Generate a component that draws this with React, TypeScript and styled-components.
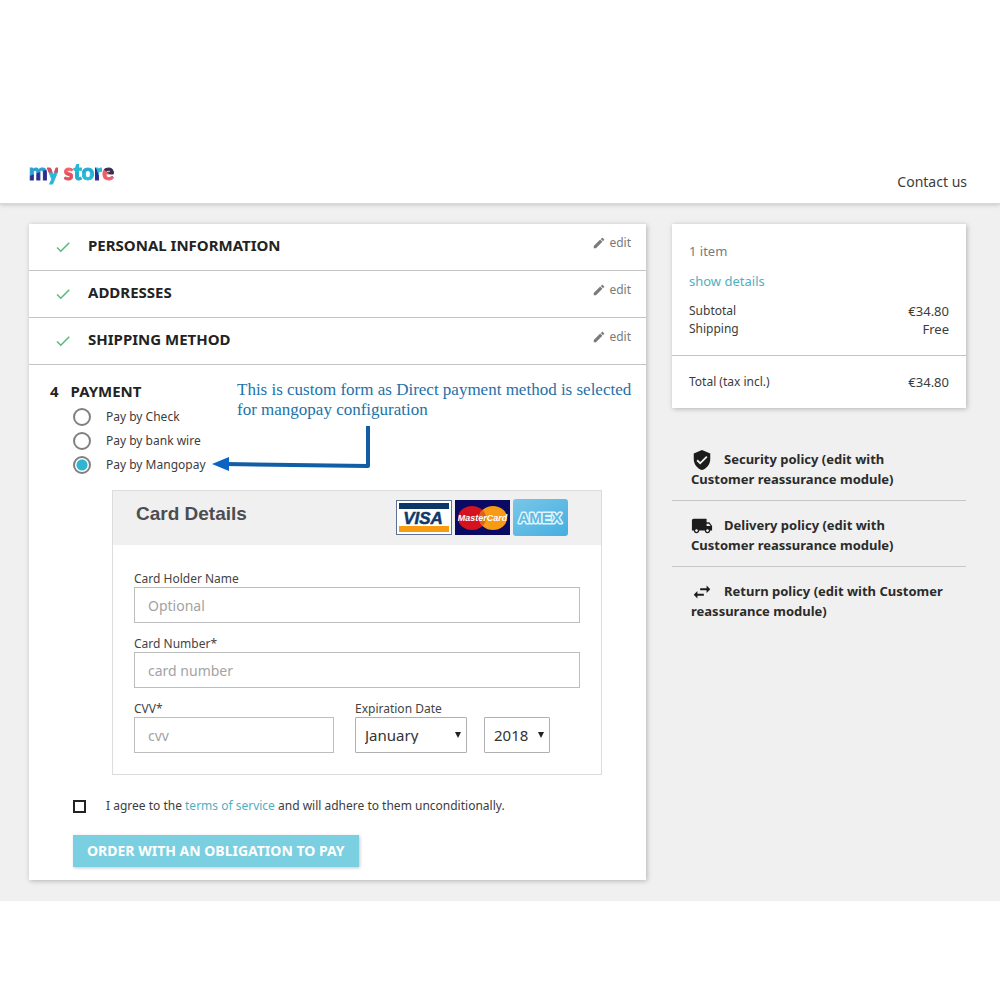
import React, { useState } from "react";
import styled, { createGlobalStyle } from "styled-components";
import { MdCheck, MdEdit, MdVerifiedUser, MdLocalShipping, MdSwapHoriz } from "react-icons/md";

const GlobalStyle = createGlobalStyle`
  *, *::before, *::after { box-sizing: border-box; }
  body {
    margin: 0;
    background: #fff;
    color: #333;
    font-family: "Noto Sans", "Open Sans", sans-serif;
    font-size: 12px;
    line-height: 18px;
  }
`;

const Header = styled.header`
  display: flex;
  justify-content: space-between;
  align-items: flex-end;
  padding: 156px 33px 12px 29px;
  border-bottom: 1px solid #d8d8d8;
  box-shadow: 0 1px 4px rgba(0, 0, 0, 0.18);
  position: relative;
`;

const Logo = styled.a`
  font-family: Lato, sans-serif;
  font-weight: 900;
  font-size: 22px;
  line-height: 32px;
  padding-bottom: 3px;
  text-decoration: none;
`;

const Letter = styled.span<{ $top: string; $bottom: string; $angle?: number }>`
  background: linear-gradient(
    ${(p) => p.$angle ?? 180}deg,
    ${(p) => p.$top} 52%,
    ${(p) => p.$bottom} 56%
  );
  background-clip: text;
  -webkit-background-clip: text;
  color: transparent;
  -webkit-text-stroke: 1px transparent;
`;

const ContactLink = styled.a`
  font-size: 14px;
  color: #3c3c3c;
  text-decoration: none;
`;

const Wrapper = styled.main`
  display: grid;
  grid-template-columns: minmax(0, 1fr) 294px;
  gap: 26px;
  align-items: start;
  padding: 20px 34px 21px 29px;
  background: #f0f0f0;
`;

const Panel = styled.section`
  background: #fff;
  box-shadow: 1px 1px 5px rgba(0, 0, 0, 0.25);
`;

const StepRow = styled.div`
  display: flex;
  align-items: center;
  height: 47px;
  padding: 0 15px 4px 25px;
  border-bottom: 1px solid #c4c4c4;
`;

const StepCheck = styled(MdCheck)`
  width: 18px;
  height: 18px;
  margin: 4px 16px 0 0;
  color: #5cb67c;
`;

const StepTitle = styled.h2`
  flex: 1;
  margin: 0;
  font-size: 15px;
  line-height: 20px;
  font-weight: 700;
  color: #232323;
`;

const EditLink = styled.a`
  display: flex;
  align-items: center;
  gap: 3px;
  padding-bottom: 4px;
  font-size: 12px;
  color: #7a7a7a;
  text-decoration: none;
`;

const Payment = styled.div`
  position: relative;
  padding: 16px 44px 13px;
`;

const PaymentTitle = styled(StepTitle)`
  display: flex;
  gap: 12px;
  margin-left: -23px;
`;

const Options = styled.div`
  display: grid;
  gap: 6px;
  padding-top: 7px;
`;

const Option = styled.label`
  display: flex;
  align-items: center;
  gap: 15px;
  height: 18px;
  color: #3c3c3c;
`;

const Radio = styled.input`
  appearance: none;
  width: 18px;
  height: 18px;
  margin: 0;
  border: 2px solid #808080;
  border-radius: 50%;
  background: #fff;
  &:checked {
    background: radial-gradient(circle, #2fb5d2 5px, #fff 6px);
  }
`;

const Note = styled.aside`
  position: absolute;
  left: 208px;
  top: 15px;
  font-family: "Liberation Serif", serif;
  font-size: 17px;
  line-height: 20px;
  color: #2272a8;
`;

const NoteText = styled.p`
  margin: 0;
`;

const NoteArrow = styled.svg`
  position: absolute;
  left: -26px;
  top: 43px;
`;

const CardBox = styled.section`
  margin: 16px 0 0 39px;
  border: 1px solid #dcdcdc;
`;

const CardHead = styled.header`
  display: flex;
  align-items: flex-start;
  justify-content: space-between;
  height: 54px;
  padding: 8px 33px 0 23px;
  background: #f0f0f0;
`;

const CardTitle = styled.h3`
  margin: 4px 0 0;
  font-family: "Liberation Sans", Arial, sans-serif;
  font-size: 19px;
  line-height: 22px;
  color: #4c4d52;
`;

const Brands = styled.div`
  display: flex;
  gap: 3px;
`;

const CardBody = styled.div`
  display: grid;
  gap: 11px;
  padding: 24px 21px 21px;
`;

const Field = styled.div`
  display: flex;
  flex-direction: column;
  flex: none;
`;

const CvvField = styled(Field)`
  width: 200px;
`;

const Label = styled.label`
  padding-top: 2px;
  line-height: 16px;
  color: #444;
  white-space: nowrap;
`;

const TextInput = styled.input`
  width: 100%;
  height: 36px;
  padding: 0 13px;
  border: 1px solid #bdbdbd;
  border-radius: 0;
  font: inherit;
  font-size: 14px;
  color: #333;
  &::placeholder { color: #a3a3a3; opacity: 1; }
`;

const FieldRow = styled.div`
  display: flex;
  align-items: flex-end;
`;

const ExpiryField = styled(Field)`
  margin: 0 17px 0 21px;
`;

const SelectWrap = styled.span<{ $width: number }>`
  position: relative;
  display: block;
  width: ${(p) => p.$width}px;
`;

const Select = styled.select`
  appearance: none;
  width: 100%;
  height: 36px;
  padding: 0 9px;
  border: 1px solid #b0b0b0;
  border-radius: 1px;
  background: #fff;
  font: inherit;
  font-size: 15px;
  color: #333;
`;

const Caret = styled.svg`
  position: absolute;
  right: 6px;
  top: 15px;
  pointer-events: none;
`;

const Terms = styled.div`
  display: flex;
  align-items: center;
  gap: 20px;
  margin-top: 22px;
  color: #3c3c3c;
`;

const Checkbox = styled.input`
  appearance: none;
  width: 13px;
  height: 13px;
  margin: 0;
  border: 2px solid #232323;
  background: #fff;
  &:checked { box-shadow: inset 0 0 0 2px #fff; background: #232323; }
`;

const TextLink = styled.a`
  color: #4fafc2;
  text-decoration: none;
`;

const OrderButton = styled.button`
  display: block;
  margin-top: 20px;
  height: 32px;
  padding: 0 14px;
  border: 0;
  background: #7acfe1;
  box-shadow: 1px 1px 3px rgba(0, 0, 0, 0.22);
  color: #fff;
  font: inherit;
  font-size: 14px;
  font-weight: 700;
  cursor: pointer;
`;

const Summary = styled(Panel)`
  color: #3c3c3c;
`;

const SummaryTop = styled.div`
  padding: 18px 17px 17px;
  border-bottom: 1px solid #c4c4c4;
`;

const ItemCount = styled.p`
  margin: 0 0 12px;
  font-size: 13px;
  color: #7a7a7a;
`;

const DetailsLink = styled(TextLink)`
  display: inline-block;
  margin-bottom: 12px;
  font-size: 13px;
`;

const PriceRow = styled.div`
  display: flex;
  justify-content: space-between;
`;

const TotalRow = styled(PriceRow)`
  padding: 17px;
`;

const Amount = styled.span`
  font-size: 13px;
`;

const Policies = styled.ul`
  margin: 27px 0 0;
  padding: 0;
  list-style: none;
`;

const Policy = styled.li`
  padding: 14px 20px 11px 19px;
  border-bottom: 1px solid #c6c6c6;
  font-weight: 700;
  font-size: 13px;
  line-height: 20px;
  color: #2b2b2b;
  &:last-child { border-bottom: 0; }
  svg {
    width: 22px;
    height: 22px;
    margin: -4px 11px -4px 0;
    vertical-align: middle;
    color: #1c1c1c;
  }
`;

const steps = ["PERSONAL INFORMATION", "ADDRESSES", "SHIPPING METHOD"];
const methods = ["Pay by Check", "Pay by bank wire", "Pay by Mangopay"];

const policies = [
  { Icon: MdVerifiedUser, text: "Security policy (edit with Customer reassurance module)" },
  { Icon: MdLocalShipping, text: "Delivery policy (edit with Customer reassurance module)" },
  { Icon: MdSwapHoriz, text: "Return policy (edit with Customer reassurance module)" },
];

const months = [
  "January", "February", "March", "April", "May", "June", "July",
  "August", "September", "October", "November", "December",
];

const brandFont = { fontFamily: '"Liberation Sans", Arial, sans-serif' };

function Visa() {
  return (
    <svg width="56" height="37" viewBox="0 0 56 37" role="img" aria-label="Visa">
      <rect x="0.5" y="1.5" width="55" height="34" fill="#fff" stroke="#5d7391" />
      <rect x="3" y="4" width="50" height="6" fill="#0b3768" />
      <rect x="3" y="27" width="50" height="6" fill="#f79c10" />
      <text x="27" y="25" textAnchor="middle" fontSize="17" fontWeight="700" fontStyle="italic" fill="#12386a" stroke="#12386a" strokeWidth="0.5" {...brandFont}>VISA</text>
    </svg>
  );
}

function MasterCard() {
  return (
    <svg width="55" height="37" viewBox="0 0 55 37" role="img" aria-label="MasterCard">
      <rect y="1" width="55" height="35" fill="#0a0a62" />
      <ellipse cx="17" cy="19" rx="14" ry="12" fill="#d4131f" />
      <ellipse cx="38" cy="19" rx="14" ry="12" fill="#f79a16" />
      <path d="M27.500 11A14 12 0 0 1 27.500 27A14 12 0 0 1 27.500 11Z" fill="#e0601c" />
      <text x="27.500" y="22" textAnchor="middle" fontSize="9" fontWeight="700" fontStyle="italic" fill="#fff" {...brandFont}>MasterCard</text>
    </svg>
  );
}

function Amex() {
  return (
    <svg width="55" height="37" viewBox="0 0 55 37" role="img" aria-label="American Express">
      <defs>
        <linearGradient id="amex" x1="0" y1="0" x2="1" y2="1">
          <stop offset="0" stopColor="#7ac6e8" />
          <stop offset="1" stopColor="#45afe0" />
        </linearGradient>
      </defs>
      <rect width="55" height="37" rx="3" fill="url(#amex)" />
      <text
        x="27" y="24" textAnchor="middle" fontSize="15" fontWeight="700"
        fill="#5cb9e2" stroke="#e0f4fc" strokeWidth="3" strokeLinejoin="round" paintOrder="stroke"
        {...brandFont}
      >
        AMEX
      </text>
    </svg>
  );
}

function DropDown({ id, label, width, options }: { id: string; label?: string; width: number; options: string[] }) {
  return (
    <SelectWrap $width={width}>
      <Select id={id} aria-label={label}>
        {options.map((o) => <option key={o}>{o}</option>)}
      </Select>
      <Caret width="6" height="6" viewBox="0 0 6 6" aria-hidden="true">
        <path d="M0 0H6L3 6Z" fill="#222" />
      </Caret>
    </SelectWrap>
  );
}

export default function App() {
  const [method, setMethod] = useState(methods[2]);

  return (
    <>
      <GlobalStyle />
      <Header>
        <Logo href="#" aria-label="my store">
          <Letter $top="#2a9fd0" $bottom="#2a2f8f" $angle={160}>m</Letter>
          <Letter $top="#d64a5c" $bottom="#25b9d7">y</Letter>{" "}
          <Letter $top="#f0616d" $bottom="#e2525e">s</Letter>
          <Letter $top="#25b9d7" $bottom="#22b0cf">t</Letter>
          <Letter $top="#25a9d0" $bottom="#25b9d7">o</Letter>
          <Letter $top="#25b9d7" $bottom="#2a2f8f" $angle={250}>r</Letter>
          <Letter $top="#3a2b4a" $bottom="#ee5f6b" $angle={220}>e</Letter>
        </Logo>
        <ContactLink href="#">Contact us</ContactLink>
      </Header>

      <Wrapper>
        <Panel>
          {steps.map((title) => (
            <StepRow key={title}>
              <StepCheck />
              <StepTitle>{title}</StepTitle>
              <EditLink href="#"><MdEdit size={14} />edit</EditLink>
            </StepRow>
          ))}

          <Payment>
            <PaymentTitle><span>4</span><span>PAYMENT</span></PaymentTitle>
            <Options>
              {methods.map((m) => (
                <Option key={m}>
                  <Radio type="radio" name="method" checked={m === method} onChange={() => setMethod(m)} />
                  {m}
                </Option>
              ))}
            </Options>

            <Note>
              <NoteText>This is custom form as Direct payment method is selected<br />for mangopay configuration</NoteText>
              <NoteArrow width="160" height="48" viewBox="0 0 160 48" aria-hidden="true">
                <path d="M157 3V43L14 41" fill="none" stroke="#125ea6" strokeWidth="4" strokeLinejoin="round" />
                <path d="M1 41L18 34V48Z" fill="#0b63c4" />
              </NoteArrow>
            </Note>

            <CardBox>
              <CardHead>
                <CardTitle>Card Details</CardTitle>
                <Brands><Visa /><MasterCard /><Amex /></Brands>
              </CardHead>
              <CardBody>
                <Field>
                  <Label htmlFor="holder">Card Holder Name</Label>
                  <TextInput id="holder" placeholder="Optional" />
                </Field>
                <Field>
                  <Label htmlFor="number">Card Number*</Label>
                  <TextInput id="number" placeholder="card number" />
                </Field>
                <FieldRow>
                  <CvvField>
                    <Label htmlFor="cvv">CVV*</Label>
                    <TextInput id="cvv" placeholder="cvv" />
                  </CvvField>
                  <ExpiryField>
                    <Label htmlFor="month">Expiration Date</Label>
                    <DropDown id="month" width={112} options={months} />
                  </ExpiryField>
                  <DropDown id="year" label="Expiration year" width={66} options={["2018", "2019", "2020", "2021"]} />
                </FieldRow>
              </CardBody>
            </CardBox>

            <Terms>
              <Checkbox type="checkbox" id="terms" />
              <label htmlFor="terms">
                I agree to the <TextLink href="#">terms of service</TextLink> and will adhere to them unconditionally.
              </label>
            </Terms>
            <OrderButton type="button">ORDER WITH AN OBLIGATION TO PAY</OrderButton>
          </Payment>
        </Panel>

        <aside>
          <Summary>
            <SummaryTop>
              <ItemCount>1 item</ItemCount>
              <DetailsLink href="#">show details</DetailsLink>
              <PriceRow><span>Subtotal</span><Amount>€34.80</Amount></PriceRow>
              <PriceRow><span>Shipping</span><Amount>Free</Amount></PriceRow>
            </SummaryTop>
            <TotalRow><span>Total (tax incl.)</span><Amount>€34.80</Amount></TotalRow>
          </Summary>
          <Policies>
            {policies.map(({ Icon, text }) => (
              <Policy key={text}><Icon />{text}</Policy>
            ))}
          </Policies>
        </aside>
      </Wrapper>
    </>
  );
}
